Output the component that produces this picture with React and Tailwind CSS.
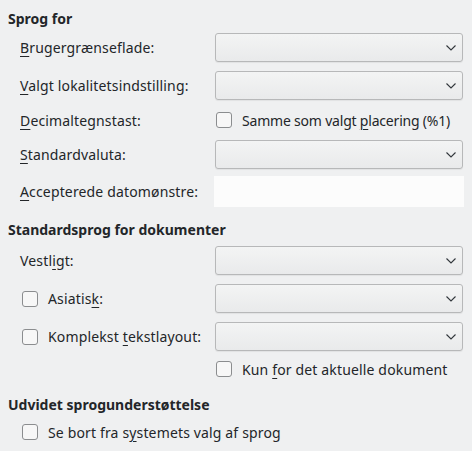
const Chevron = () => (
    <svg width="10" height="6" viewBox="0 0 10 6" className="shrink-0">
        <path d="M0.5 0.5 L5 5 L9.5 0.5" fill="none" stroke="#31363b" strokeWidth="1.1" />
    </svg>
);

const Combo = () => (
    <div className="h-full w-[248px] rounded-[3px] border border-[#b7b8b9] bg-gradient-to-b from-[#f3f4f4] to-[#e9eaeb] shadow-[0_1px_1px_rgba(0,0,0,0.06)] flex items-center justify-end pr-[6px]">
        <Chevron />
    </div>
);

const Check = () => (
    <span className="inline-block w-[16px] h-[16px] rounded-[3px] border border-[#8b8d8f] bg-[#f7f7f7] shrink-0" />
);

const M = ({ children }) => <span className="underline underline-offset-[3px] decoration-1">{children}</span>;

const Row = ({ label, className = "", children }) => (
    <div className={`flex items-center ${className}`}>
        <div className="w-[207px] pl-3 shrink-0">{label}</div>
        {children}
    </div>
);

const CheckLabel = ({ children }) => (
    <div className="flex items-center gap-[10px] pl-[14px]">
        <Check />
        <span>{children}</span>
    </div>
);

export default function App() {
    return (
        <div
            className="w-[472px] h-[451px] bg-[#eff0f1] text-[#232629] text-[14px] tracking-[0.15px] whitespace-nowrap px-2 pt-2 overflow-hidden"
            style={{ fontFamily: '"Noto Sans", sans-serif' }}
        >
            <div className="h-5 flex items-center font-bold tracking-normal">Sprog for</div>

            <Row className="mt-[5px] h-[29px]" label={<><M>B</M>rugergrænseflade:</>}>
                <Combo />
            </Row>
            <Row className="mt-[9px] h-[29px]" label={<><M>V</M>algt lokalitetsindstilling:</>}>
                <Combo />
            </Row>
            <Row className="mt-[9px] h-[22px]" label={<><M>D</M>ecimaltegnstast:</>}>
                <div className="flex items-center gap-[10px] pl-[1px]">
                    <Check />
                    <span className="tracking-[-0.2px]">Samme som valgt <M>p</M>lacering (%1)</span>
                </div>
            </Row>
            <Row className="mt-[9px] h-[29px]" label={<><M>S</M>tandardvaluta:</>}>
                <Combo />
            </Row>
            <Row className="mt-[7px] h-[31px]" label={<><M>A</M>ccepterede datomønstre:</>}>
                <div className="h-full w-[250px] -ml-[1px] bg-[#fcfcfc]" />
            </Row>

            <div className="mt-[12px] h-5 flex items-center font-bold tracking-normal">Standardsprog for dokumenter</div>

            <Row className="mt-[7px] h-[29px]" label={<>Vestl<M>i</M>gt:</>}>
                <Combo />
            </Row>
            <div className="mt-[9px] h-[29px] flex items-center">
                <div className="w-[207px] shrink-0">
                    <CheckLabel>Asiatis<M>k</M>:</CheckLabel>
                </div>
                <Combo />
            </div>
            <div className="mt-[9px] h-[29px] flex items-center">
                <div className="w-[207px] shrink-0">
                    <CheckLabel>Komplekst <M>t</M>ekstlayout:</CheckLabel>
                </div>
                <Combo />
            </div>
            <div className="mt-[7px] h-[22px] flex items-center">
                <div className="w-[207px] shrink-0" />
                <div className="flex items-center gap-[10px] pl-[1px]">
                    <Check />
                    <span>Kun <M>f</M>or det aktuelle dokument</span>
                </div>
            </div>

            <div className="mt-[14px] h-5 flex items-center font-bold tracking-normal">Udvidet sprogunderstøttelse</div>

            <div className="mt-[7px] h-[22px] flex items-center">
                <CheckLabel>Se bort fra s<M>y</M>stemets valg af sprog</CheckLabel>
            </div>
        </div>
    );
}
